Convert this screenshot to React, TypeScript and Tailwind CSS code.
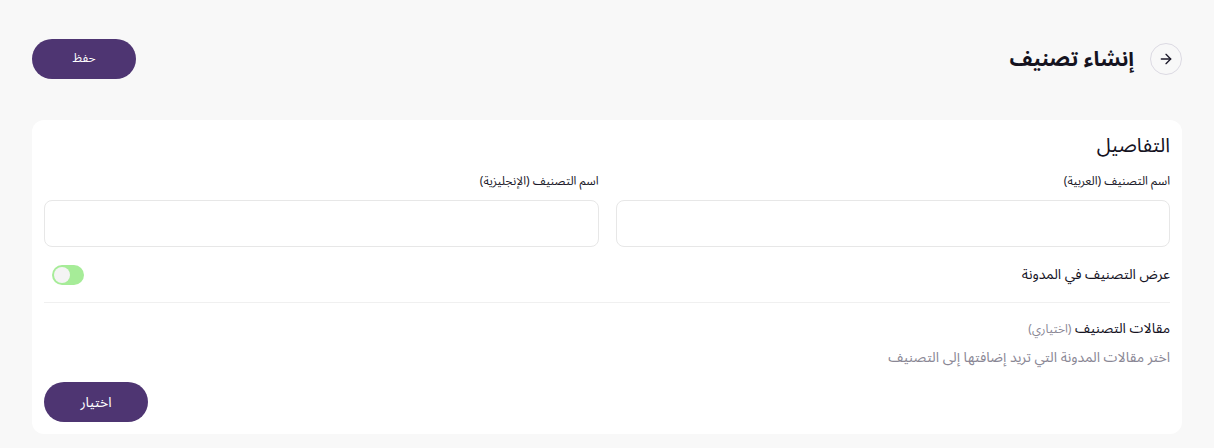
import { ArrowRight } from "lucide-react";

const Field = ({ label }: { label: string }) => (
  <div className="flex flex-col gap-[9px]">
    <label className="text-[12px] leading-[18px] text-[#1c1a2a]">{label}</label>
    <input className="h-[47px] w-full rounded-lg border border-[#e7e7e7] bg-white px-3 text-sm outline-none" />
  </div>
);

export default function App() {
  return (
    <div
      dir="rtl"
      className="min-h-[448px] bg-[#f8f8f8] px-[32px] pt-[39px] pb-[15px] text-[#15131f]"
      style={{ fontFamily: '"Noto Sans Arabic", "Noto Sans", "DejaVu Sans", sans-serif' }}
    >
      <div className="flex items-center justify-between">
        <div className="flex items-center gap-4">
          <button className="flex h-8 w-8 items-center justify-center rounded-full border border-[#dcdae3] text-[#1c1a2a]">
            <ArrowRight size={16} strokeWidth={2} />
          </button>
          <h1 className="text-[21px] font-bold leading-8">إنشاء تصنيف</h1>
        </div>
        <button className="h-10 w-[104px] rounded-full bg-[#4e3572] text-[12px] text-white">
          حفظ
        </button>
      </div>

      <div className="mt-[41px] rounded-xl bg-white p-3">
        <h2 className="mb-[13px] text-[20px] leading-[28px]">التفاصيل</h2>
        <div className="grid grid-cols-2 gap-[17px]">
          <Field label="اسم التصنيف (العربية)" />
          <Field label="اسم التصنيف (الإنجليزية)" />
        </div>

        <div className="mt-[18px] flex items-center justify-between pl-2 pb-[17px]">
          <span className="text-[14px] leading-5">عرض التصنيف في المدونة</span>
          <button className="flex h-5 w-8 items-center justify-end rounded-full bg-[#a6ec98] px-[2px]">
            <span className="h-4 w-4 rounded-full bg-[#f4f4f4]" />
          </button>
        </div>
        <div className="h-px bg-[#f0f0f0]" />

        <div className="pt-[16px]">
          <div className="text-[14px] leading-5">
            مقالات التصنيف <span className="text-[12px] text-[#8a8795]">(اختياري)</span>
          </div>
          <p className="mt-2 text-[14px] leading-5 text-[#8a8795]">
            اختر مقالات المدونة التي تريد إضافتها إلى التصنيف
          </p>
          <div className="mt-[14px] flex justify-end">
            <button className="h-10 w-[104px] rounded-full bg-[#4e3572] text-[14px] text-white">
              اختيار
            </button>
          </div>
        </div>
      </div>
    </div>
  );
}
